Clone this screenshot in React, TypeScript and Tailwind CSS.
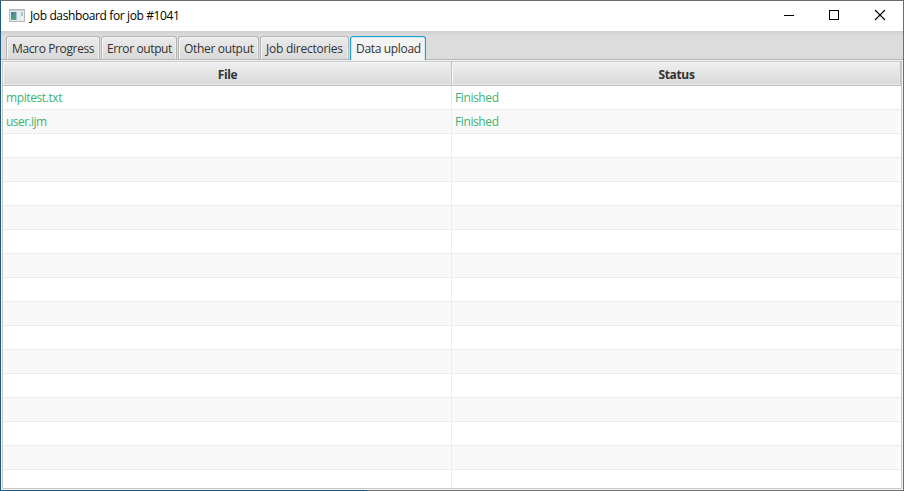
const tabs = [
  { label: 'Macro Progress', box: 'w-[94px]', text: 'tracking-[-0.37px]' },
  { label: 'Error output', box: 'w-[76px]', text: 'tracking-[-0.38px]' },
  { label: 'Other output', box: 'w-[81px]', text: 'tracking-[-0.33px]' },
  { label: 'Job directories', box: 'w-[89px]', text: 'tracking-[-0.25px]' },
];

const files = [
  { name: 'mpitest.txt', status: 'Finished', text: 'tracking-[-0.4px]' },
  { name: 'user.ijm', status: 'Finished', text: 'tracking-[-0.55px]' },
];

const rows = Array.from({ length: 17 }, (_, i) => files[i] ?? { name: '', status: '', text: '' });

function AppIcon() {
  return (
    <svg className="ml-2 h-[14px] w-4" viewBox="0 0 16 14" shapeRendering="crispEdges">
      <defs>
        <linearGradient id="screen" x1="0" y1="0" x2="0.6" y2="1">
          <stop offset="0" stopColor="#4678a0" />
          <stop offset="1" stopColor="#4fae78" />
        </linearGradient>
      </defs>
      <rect x="0.5" y="0.5" width="15" height="12" fill="#e8eaec" stroke="#b4b8bc" />
      <rect x="1" y="1" width="14" height="1" fill="#c9ccd0" />
      <rect x="2" y="3" width="5" height="8" fill="url(#screen)" />
      <rect x="7" y="3" width="1" height="8" fill="#a8c4cc" />
      <rect x="8" y="3" width="4" height="8" fill="#e6eaf2" />
      <rect x="12" y="3" width="2" height="4" fill="#a9ccba" />
      <rect x="12" y="7" width="2" height="4" fill="#eef4f0" />
    </svg>
  );
}

function TitleBar() {
  return (
    <header className="flex h-[30px] shrink-0 items-center bg-white">
      <AppIcon />
      <h1 className="ml-[5px] grow whitespace-nowrap text-[12px] leading-4 tracking-[-0.38px] text-black">
        Job dashboard for job #1041
      </h1>
      <svg className="h-[30px] w-[138px]" viewBox="0 0 138 30" fill="none" stroke="#000">
        <path d="M19 14.5h10" shapeRendering="crispEdges" />
        <rect x="64.5" y="9.5" width="9" height="9" shapeRendering="crispEdges" />
        <path d="M110 9l10 10M120 9l-10 10" strokeWidth="1.1" />
      </svg>
    </header>
  );
}

function TabStrip() {
  return (
    <nav className="flex h-[29px] shrink-0 items-end gap-px border-b border-[#b5b5b5] bg-[#dcdcdc] bg-[linear-gradient(#d0d0d0,#dcdcdc_5px)] pl-[5px] text-[12px]">
      {tabs.map((tab) => (
        <div
          key={tab.label}
          className={`flex h-[23px] rounded-t-[3px] border border-b-0 border-[#b5b5b5] bg-linear-to-b from-[#ebebeb] to-[#d9d9d9] pt-[4px] pl-[5px] leading-4 whitespace-nowrap text-[#333] shadow-[inset_1px_1px_0_#f6f6f6,inset_-1px_0_0_#eee] ${tab.box} ${tab.text}`}
        >
          {tab.label}
        </div>
      ))}
      <div className="-mb-px flex h-[24px] w-[76px] rounded-t-[3px] border border-b-0 border-[#1ba1cb] bg-[#f4f4f4] pt-[4px] pl-[5px] leading-4 tracking-[-0.33px] whitespace-nowrap text-[#333] shadow-[inset_1px_1px_0_#cde9f2,inset_-1px_0_0_#cde9f2]">
        Data upload
      </div>
    </nav>
  );
}

function HeaderCell({ children }: { children: string }) {
  return (
    <div className="border-r border-b border-[#c2c2c2] bg-linear-to-b from-[#efefef] to-[#d9d9d9] pt-[5px] pl-px text-center leading-4 font-bold text-[#333] shadow-[inset_1px_1px_0_#f7f7f7,inset_-1px_-1px_0_#e8e8e8]">
      {children}
    </div>
  );
}

function UploadTable() {
  return (
    <main className="flex min-h-0 grow flex-col overflow-hidden border border-[#c8c8c8] bg-white text-[12px]">
      <div className="grid h-6 shrink-0 grid-cols-[449px_1fr] tracking-[-0.35px]">
        <HeaderCell>File</HeaderCell>
        <HeaderCell>Status</HeaderCell>
      </div>
      {rows.map((row, i) => (
        <div
          key={i}
          className="grid h-6 shrink-0 grid-cols-[449px_1fr] border-b border-[#ededed] leading-4 tracking-[-0.4px] text-[#3cb371] odd:bg-[#f9f9f9] even:bg-white"
        >
          <div className={`border-r border-[#ededed] pt-[4px] pl-[3px] ${row.text}`}>{row.name}</div>
          <div className="pt-[4px] pl-[3px]">{row.status}</div>
        </div>
      ))}
    </main>
  );
}

export default function App() {
  return (
    <div className="flex h-[491px] w-[904px] flex-col overflow-hidden border border-t-[#6d6d6d] border-r-[#6d6d6d] border-b-[#6d6d6d] border-l-[#1c5b7c] bg-[#f4f4f4] font-['Open_Sans','Noto_Sans',sans-serif]">
      <TitleBar />
      <TabStrip />
      <div className="flex min-h-0 grow flex-col p-px">
        <UploadTable />
      </div>
      <div className="fixed bottom-0 left-0 h-px w-[367px] bg-[#1c5b7c]" />
    </div>
  );
}
